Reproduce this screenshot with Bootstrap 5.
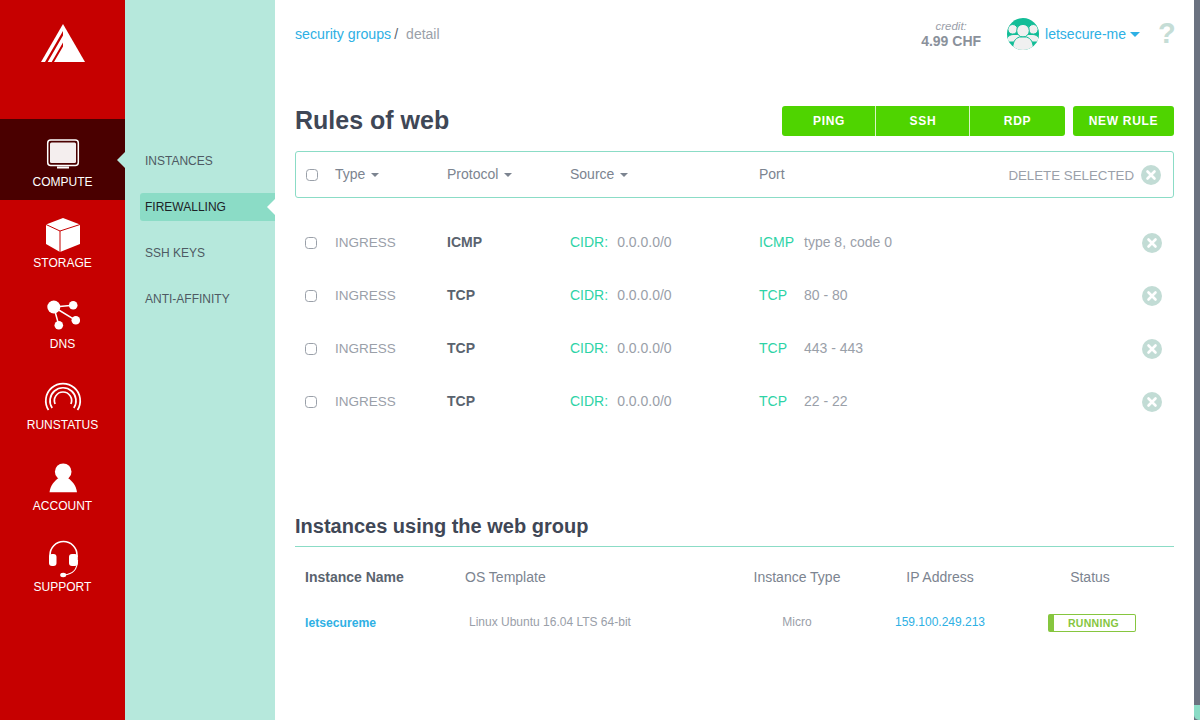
<!DOCTYPE html>
<html lang="en">
<head>
  <meta charset="UTF-8">
  <title>Rules of web</title>
  <link href="https://cdn.jsdelivr.net/npm/bootstrap@5.3.2/dist/css/bootstrap.min.css" rel="stylesheet">
  <style>
    html, body { height: 720px; overflow: hidden; }
    body { font-family: "Liberation Sans", Arial, sans-serif; font-size: 14px; color: #9aa0a9; background: #fff; }
    .app-shell { height: 720px; }
    .side-main { width: 125px; background: #c60000; }
    .side-logo { height: 119px; padding: 24px 0 0 41px; }
    .side-logo svg { display: block; }
    .side-item { height: 81px; color: #fff; font-size: 12px; position: relative; text-align: center; }
    .side-item svg { display: block; margin: 0 auto; }
    .side-item span { display: block; line-height: 14px; }
    .side-item.is-on { background: #4a0000; }
    .side-item.is-on::after { content: ""; position: absolute; right: 0; top: 33px; border: 8px solid transparent; border-left-width: 0; border-right-color: #b6e8dc; }
    .item-compute { padding-top: 20px; }
    .item-compute span { margin-top: 5px; }
    .item-storage { padding-top: 18px; }
    .item-storage span { margin-top: 4px; }
    .item-dns { padding-top: 17px; }
    .item-dns span { margin-top: 5px; }
    .item-status { padding-top: 20px; }
    .item-status span { margin-top: 7px; }
    .item-account { padding-top: 20px; }
    .item-account span { margin-top: 6px; }
    .item-support { padding-top: 16px; }
    .item-support span { margin-top: 2px; }
    .side-sub { width: 150px; background: #b6e8dc; padding: 147px 0 0 15px; }
    .sub-item { height: 28px; line-height: 28px; padding-left: 5px; font-size: 12px; color: #4e5a63; margin-bottom: 18px; position: relative; }
    .sub-item.is-on { background: #8bdcc6; color: #1c2226; border-radius: 3px 0 0 3px; }
    .sub-item.is-on::after { content: ""; position: absolute; right: 0; top: 6px; border: 8px solid transparent; border-left-width: 0; border-right-color: #fff; }
    .page-main { width: 919px; padding: 17px 20px 0; }
    .scroll-track { width: 6px; background: #6b7280; }
    .scroll-end { height: 15px; background: #8bdcc6; border-radius: 0 0 0 5px; }
    .top-bar { height: 34px; }
    .crumb-link { color: #2eb0e4; text-decoration: none; font-size: 14.2px; padding-top: 2px; }
    .crumb-sep { color: #5a636e; margin: 0 8px 0 3px; }
    .crumb-now { font-size: 14px; }
    .credit-box { text-align: center; margin-right: 26px; line-height: 15px; }
    .credit-box i { display: block; font-size: 11.5px; }
    .credit-box b { display: block; color: #8a919b; font-size: 14px; }
    .user-name { color: #2eb0e4; margin-left: 6px; }
    .user-caret { display: inline-block; border: 5px solid transparent; border-bottom-width: 0; border-top-color: #2eb0e4; margin-left: 4px; vertical-align: 2px; }
    .help-mark { color: #c5ddd6; font-size: 29px; font-weight: 700; line-height: 28px; margin: 0 0 2px 18px; width: 16px; }
    .title-row { margin-top: 55px; height: 30px; }
    .page-title { font-size: 25px; font-weight: 700; color: #3f4756; margin: 0 0 2px; line-height: 28px; }
    .btn-lime { background: #4fd400; color: #fff; font-size: 12px; font-weight: 700; letter-spacing: .7px; height: 30px; padding: 0; line-height: 30px; border: 0; border-radius: 3px; }
    .btn-lime:hover { background: #4fd400; color: #fff; }
    .btn-three { width: 94px; }
    .btn-three + .btn-three { border-left: 1px solid #d8f5c4; width: 95px; }
    .btn-three:last-child { width: 96px; }
    .btn-new { width: 101px; margin-left: 8px; }
    .filter-box { margin-top: 15px; height: 47px; border: 1px solid #8bdcc6; border-radius: 3px; color: #7c8490; }
    .rule-grid { display: grid; grid-template-columns: 30px 112px 123px 189px 1fr 32px; align-items: center; }
    .filter-box .rule-grid { height: 45px; padding-left: 10px; grid-template-columns: 29px 112px 123px 189px 1fr 32px; }
    .rule-rows { margin-top: 18px; }
    .rule-rows .rule-grid { height: 53px; padding-left: 10px; }
    .check-sm { width: 12px; height: 12px; margin: 0; border-color: #9aa0a9; border-radius: 2px; }
    .sort-caret { display: inline-block; border: 4.5px solid transparent; border-bottom-width: 0; border-top-color: #7c8490; margin-left: 6px; vertical-align: 2px; }
    .del-label { color: #9aa0a9; margin-right: 7px; font-size: 13.3px; padding-top: 2px; }
    .ingress-text { font-size: 13.5px; padding-top: 1px; }
    .proto-name { font-weight: 700; color: #5a636e; }
    .teal-text { color: #2ed3a6; }
    .source-val { margin-left: 9px; }
    .port-name { display: inline-block; width: 45px; }
    .x-btn { width: 20px; height: 20px; border-radius: 50%; background: #c2dcd5; display: block; }
    .inst-head { margin: 84px 0 0; height: 35px; border-bottom: 1px solid #8bdcc6; font-size: 20px; font-weight: 700; color: #3f4756; line-height: 28px; }
    .inst-grid { display: grid; grid-template-columns: 160px 260px 144px 142px 158px; padding-left: 10px; align-items: center; }
    .inst-labels { height: 60px; color: #7c8490; }
    .inst-values { height: 30px; font-size: 12px; }
    .inst-strong { font-weight: 700; color: #5a636e; }
    .inst-link { color: #2eb0e4; text-decoration: none; }
    .inst-name { font-weight: 700; font-size: 12.2px; padding-top: 2px; }
    .status-cell { padding-top: 2px; }
    .status-pill { display: block; width: 88px; height: 18px; border: 1px solid #86c63f; border-left-width: 6px; border-radius: 2px; color: #86c63f; font-size: 10.5px; font-weight: 700; line-height: 17px; text-align: center; letter-spacing: .3px; margin-left: 37px; padding-right: 2px; }
  </style>
</head>
<body>
  <div class="app-shell d-flex">
    <nav class="side-main flex-shrink-0">
      <div class="side-logo">
        <svg width="44" height="38" viewBox="0 0 44 38">
          <path d="M22 0 44 38H0Z" fill="#fff"/>
          <path d="M4 38 22 6.900V11.600L6.700 38ZM10.700 38 22 18.500V22.500L13 38Z" fill="#c60000"/>
        </svg>
      </div>
      <a class="side-item item-compute is-on d-block text-decoration-none">
        <svg width="34" height="31" viewBox="0 0 34 31">
          <rect x="1.700" y="1" width="30.600" height="25.500" rx="3" fill="none" stroke="#fff" stroke-width="1.500"/>
          <rect x="4" y="3.500" width="26" height="20.500" rx="1.500" fill="#f4eeee"/>
          <rect x="11" y="27.500" width="12" height="2" fill="#fff"/>
        </svg>
        <span>COMPUTE</span>
      </a>
      <a class="side-item item-storage d-block text-decoration-none">
        <svg width="34" height="34" viewBox="0 0 34 34">
          <path d="M17 0 34 6.500V26L14 34 0 26V6.500Z" fill="#fff"/>
          <path d="M0 6.500 14 13 34 6.500M14 13V34" fill="none" stroke="#c60000" stroke-width="1"/>
        </svg>
        <span>STORAGE</span>
      </a>
      <a class="side-item item-dns d-block text-decoration-none">
        <svg width="34" height="34" viewBox="0 0 34 34">
          <path d="M7.800 9 27.200 7.300M7.800 9 29.800 22.300M7.800 9 12.800 27.300" fill="none" stroke="#fff" stroke-width="1.500"/>
          <g fill="#fff">
            <circle cx="7.800" cy="9" r="6.500"/>
            <circle cx="27.200" cy="7.300" r="4.300"/>
            <circle cx="29.800" cy="22.300" r="4.300"/>
            <circle cx="12.800" cy="27.300" r="4.300"/>
          </g>
        </svg>
        <span>DNS</span>
      </a>
      <a class="side-item item-status d-block text-decoration-none">
        <svg width="38" height="29" viewBox="0 0 38 29" fill="none" stroke="#fff" stroke-width="1.700">
          <path d="M4.500 28A17.200 17.200 0 1 1 33.500 28"/>
          <path d="M8.200 26A13 13 0 1 1 29.800 26"/>
          <path d="M11.100 22A8.600 8.600 0 1 1 26.900 22"/>
        </svg>
        <span>RUNSTATUS</span>
      </a>
      <a class="side-item item-account d-block text-decoration-none">
        <svg width="30" height="30" viewBox="0 0 30 30">
          <circle cx="15.200" cy="8.700" r="8.300" fill="#fff"/>
          <path d="M1.500 29.300C2.500 22 6 18.500 10.500 15H20C24.500 18.500 28 22 29 29.300Z" fill="#fff"/>
        </svg>
        <span>ACCOUNT</span>
      </a>
      <a class="side-item item-support d-block text-decoration-none">
        <svg width="32" height="38" viewBox="0 0 32 38">
          <path d="M3 17V15A13.500 13.500 0 0 1 30 15V17" fill="none" stroke="#fff" stroke-width="1.600"/>
          <rect x="2" y="14" width="7.500" height="12" rx="3" fill="#fff"/>
          <rect x="22" y="14" width="8.800" height="12" rx="3" fill="#fff"/>
          <path d="M30.500 20C30.500 30 26 34 17 35" fill="none" stroke="#fff" stroke-width="1.200"/>
          <ellipse cx="16.200" cy="35" rx="3" ry="2.200" fill="#fff"/>
        </svg>
        <span>SUPPORT</span>
      </a>
    </nav>

    <div class="side-sub flex-shrink-0">
      <div class="sub-item">INSTANCES</div>
      <div class="sub-item is-on">FIREWALLING</div>
      <div class="sub-item">SSH KEYS</div>
      <div class="sub-item">ANTI-AFFINITY</div>
    </div>

    <main class="page-main flex-shrink-0">
      <div class="top-bar d-flex align-items-center">
        <a class="crumb-link" href="#">security groups</a>
        <span class="crumb-sep">/</span>
        <span class="crumb-now">detail</span>
        <div class="ms-auto d-flex align-items-center">
          <div class="credit-box"><i>credit:</i><b>4.99 CHF</b></div>
          <svg width="32" height="32" viewBox="0 0 32 32">
            <clipPath id="avatarClip"><circle cx="16" cy="16" r="16"/></clipPath>
            <circle cx="16" cy="16" r="16" fill="#12bd97"/>
            <g clip-path="url(#avatarClip)" fill="#f0f0f0" stroke="#12bd97" stroke-width="1">
              <circle cx="5.700" cy="11.300" r="4.800"/>
              <circle cx="26.300" cy="11.300" r="4.800"/>
              <path d="M-2 24C0 19 2 17 6 16.500H26C30 17 32 19 34 24Z"/>
              <circle cx="16" cy="12.700" r="6.300"/>
              <path d="M5.500 33C5.500 24 8 20.500 12.500 19H19.500C24 20.500 26.500 24 26.500 33Z"/>
            </g>
          </svg>
          <span class="user-name">letsecure-me</span><span class="user-caret"></span>
          <span class="help-mark">?</span>
        </div>
      </div>

      <div class="title-row d-flex align-items-center">
        <h1 class="page-title me-auto">Rules of web</h1>
        <div class="btn-group">
          <button class="btn btn-lime btn-three">PING</button>
          <button class="btn btn-lime btn-three">SSH</button>
          <button class="btn btn-lime btn-three">RDP</button>
        </div>
        <button class="btn btn-lime btn-new">NEW RULE</button>
      </div>

      <div class="filter-box">
        <div class="rule-grid">
          <input class="form-check-input check-sm" type="checkbox" aria-label="Select all">
          <div>Type<span class="sort-caret"></span></div>
          <div>Protocol<span class="sort-caret"></span></div>
          <div>Source<span class="sort-caret"></span></div>
          <div class="d-flex align-items-center justify-content-between">
            <span>Port</span>
            <span class="del-label">DELETE SELECTED</span>
          </div>
          <svg class="x-btn" viewBox="0 0 20 20"><path d="M6.500 6.500 13.500 13.500M13.500 6.500 6.500 13.500" stroke="#fff" stroke-width="2.600" stroke-linecap="round"/></svg>
        </div>
      </div>

      <div class="rule-rows">
        <div class="rule-grid">
          <input class="form-check-input check-sm" type="checkbox" aria-label="Select rule">
          <div class="ingress-text">INGRESS</div>
          <div class="proto-name">ICMP</div>
          <div><span class="teal-text">CIDR:</span><span class="source-val">0.0.0.0/0</span></div>
          <div><span class="teal-text port-name">ICMP</span>type 8, code 0</div>
          <svg class="x-btn" viewBox="0 0 20 20"><path d="M6.500 6.500 13.500 13.500M13.500 6.500 6.500 13.500" stroke="#fff" stroke-width="2.600" stroke-linecap="round"/></svg>
        </div>
        <div class="rule-grid">
          <input class="form-check-input check-sm" type="checkbox" aria-label="Select rule">
          <div class="ingress-text">INGRESS</div>
          <div class="proto-name">TCP</div>
          <div><span class="teal-text">CIDR:</span><span class="source-val">0.0.0.0/0</span></div>
          <div><span class="teal-text port-name">TCP</span>80 - 80</div>
          <svg class="x-btn" viewBox="0 0 20 20"><path d="M6.500 6.500 13.500 13.500M13.500 6.500 6.500 13.500" stroke="#fff" stroke-width="2.600" stroke-linecap="round"/></svg>
        </div>
        <div class="rule-grid">
          <input class="form-check-input check-sm" type="checkbox" aria-label="Select rule">
          <div class="ingress-text">INGRESS</div>
          <div class="proto-name">TCP</div>
          <div><span class="teal-text">CIDR:</span><span class="source-val">0.0.0.0/0</span></div>
          <div><span class="teal-text port-name">TCP</span>443 - 443</div>
          <svg class="x-btn" viewBox="0 0 20 20"><path d="M6.500 6.500 13.500 13.500M13.500 6.500 6.500 13.500" stroke="#fff" stroke-width="2.600" stroke-linecap="round"/></svg>
        </div>
        <div class="rule-grid">
          <input class="form-check-input check-sm" type="checkbox" aria-label="Select rule">
          <div class="ingress-text">INGRESS</div>
          <div class="proto-name">TCP</div>
          <div><span class="teal-text">CIDR:</span><span class="source-val">0.0.0.0/0</span></div>
          <div><span class="teal-text port-name">TCP</span>22 - 22</div>
          <svg class="x-btn" viewBox="0 0 20 20"><path d="M6.500 6.500 13.500 13.500M13.500 6.500 6.500 13.500" stroke="#fff" stroke-width="2.600" stroke-linecap="round"/></svg>
        </div>
      </div>

      <h2 class="inst-head">Instances using the web group</h2>
      <div class="inst-grid inst-labels">
        <div class="inst-strong">Instance Name</div>
        <div>OS Template</div>
        <div class="text-center">Instance Type</div>
        <div class="text-center">IP Address</div>
        <div class="text-center">Status</div>
      </div>
      <div class="inst-grid inst-values">
        <a class="inst-link inst-name" href="#">letsecureme</a>
        <div class="ps-1">Linux Ubuntu 16.04 LTS 64-bit</div>
        <div class="text-center">Micro</div>
        <a class="inst-link text-center" href="#">159.100.249.213</a>
        <div class="status-cell"><span class="status-pill">RUNNING</span></div>
      </div>
    </main>

    <div class="scroll-track flex-shrink-0 d-flex flex-column justify-content-end">
      <div class="scroll-end"></div>
    </div>
  </div>
  <script src="https://cdn.jsdelivr.net/npm/bootstrap@5.3.2/dist/js/bootstrap.bundle.min.js"></script>
</body>
</html>
